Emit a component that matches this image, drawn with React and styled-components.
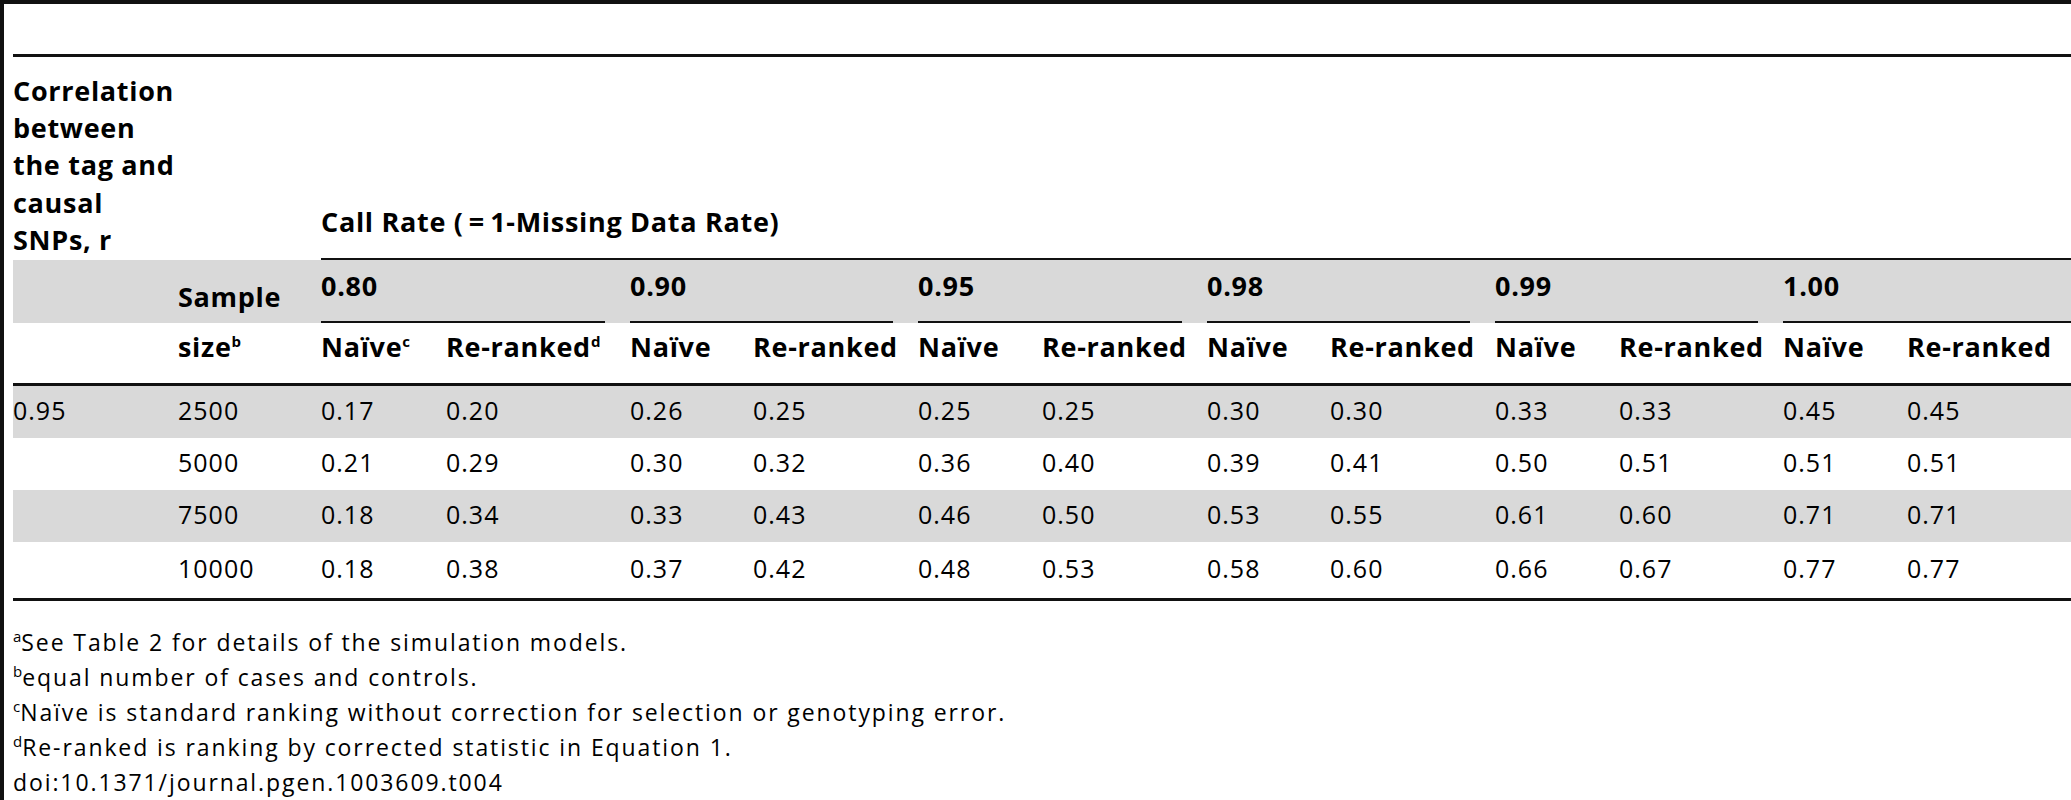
import styled, { createGlobalStyle } from 'styled-components';

const GlobalStyle = createGlobalStyle`
  html, body {
    margin: 0;
    padding: 0;
    background: #fff;
  }
  body {
    font-family: "Open Sans", "Liberation Sans", Arial, sans-serif;
    color: #000;
  }
`;

const Frame = styled.div`
  box-sizing: border-box;
  width: 2071px;
  height: 800px;
  overflow: hidden;
  border-top: 4px solid #111;
  border-left: 4px solid #111;
  padding: 50px 0 0 9px;
`;

const Table = styled.table`
  width: 2058px;
  table-layout: fixed;
  border-collapse: separate;
  border-spacing: 0;
  border-top: 3px solid #111;
  border-bottom: 3px solid #111;
`;

const Col = styled.col`
  width: ${(p) => p.$w}px;
`;

const Row = styled.tr`
  height: ${(p) => p.$h}px;
  background: ${(p) => (p.$shaded ? '#d9d9d9' : 'transparent')};
`;

const HeadCell = styled.th`
  padding: 0 24px 9px 0;
  text-align: left;
  vertical-align: bottom;
  font-weight: 700;
  font-size: 27px;
  line-height: 35px;
  letter-spacing: 0.7px;
  white-space: nowrap;
`;

const StubHead = styled(HeadCell)`
  padding-bottom: 2px;
  line-height: 37.2px;
`;

const SpanHead = styled(HeadCell)`
  padding: 0 0 19px;
  border-bottom: 2px solid #111;
`;

const SubHead = styled(HeadCell)`
  padding-bottom: 19px;
  border-bottom: 3px solid #111;
`;

const GroupCell = styled(HeadCell)`
  padding: 0;
`;

const GroupLabel = styled.div`
  margin-right: ${(p) => (p.$last ? 0 : 25)}px;
  padding-bottom: 18px;
  border-bottom: 2px solid #111;
`;

const Sup = styled.sup`
  font-size: 15px;
  line-height: 0;
  letter-spacing: 0;
  vertical-align: super;
`;

const Cell = styled.td`
  padding: 0 24px 4px 0;
  vertical-align: middle;
  font-size: 25px;
  line-height: 34px;
  letter-spacing: 1px;
  white-space: nowrap;
`;

const Notes = styled.div`
  margin-top: 24px;
  font-size: 23px;
  line-height: 35px;
  letter-spacing: 1.9px;
`;

const Note = styled.p`
  margin: 0;
  white-space: nowrap;
`;

const widths = [165, 143, 125, 184, 123, 165, 124, 165, 123, 165, 124, 164, 124, 164];
const callRates = ['0.80', '0.90', '0.95', '0.98', '0.99', '1.00'];
const rowHeights = [52, 52, 52, 56];

const rows = [
  ['0.95', '2500', '0.17', '0.20', '0.26', '0.25', '0.25', '0.25', '0.30', '0.30', '0.33', '0.33', '0.45', '0.45'],
  ['', '5000', '0.21', '0.29', '0.30', '0.32', '0.36', '0.40', '0.39', '0.41', '0.50', '0.51', '0.51', '0.51'],
  ['', '7500', '0.18', '0.34', '0.33', '0.43', '0.46', '0.50', '0.53', '0.55', '0.61', '0.60', '0.71', '0.71'],
  ['', '10000', '0.18', '0.38', '0.37', '0.42', '0.48', '0.53', '0.58', '0.60', '0.66', '0.67', '0.77', '0.77'],
];

const App = () => {
  return (
    <>
      <GlobalStyle />
      <Frame>
        <Table>
          <colgroup>
            {widths.map((w, i) => (
              <Col key={i} $w={w} />
            ))}
          </colgroup>
          <thead>
            <Row $h={203}>
              <StubHead>
                Correlation
                <br />
                between
                <br />
                the tag and
                <br />
                causal
                <br />
                SNPs, r
              </StubHead>
              <HeadCell />
              <SpanHead colSpan={12}>Call Rate (&#8201;=&#8201;1-Missing Data Rate)</SpanHead>
            </Row>
            <Row $h={63} $shaded>
              <HeadCell />
              <HeadCell>Sample</HeadCell>
              {callRates.map((rate, i) => (
                <GroupCell key={rate} colSpan={2}>
                  <GroupLabel $last={i === callRates.length - 1}>{rate}</GroupLabel>
                </GroupCell>
              ))}
            </Row>
            <Row $h={63}>
              <SubHead />
              <SubHead>
                size<Sup>b</Sup>
              </SubHead>
              {callRates.map((rate, i) => [
                <SubHead key={rate + 'n'}>
                  Naïve{i === 0 && <Sup>c</Sup>}
                </SubHead>,
                <SubHead key={rate + 'r'}>
                  Re-ranked{i === 0 && <Sup>d</Sup>}
                </SubHead>,
              ])}
            </Row>
          </thead>
          <tbody>
            {rows.map((row, r) => (
              <Row key={r} $h={rowHeights[r]} $shaded={r % 2 === 0}>
                {row.map((value, c) => (
                  <Cell key={c}>{value}</Cell>
                ))}
              </Row>
            ))}
          </tbody>
        </Table>
        <Notes>
          <Note>
            <Sup>a</Sup>See Table 2 for details of the simulation models.
          </Note>
          <Note>
            <Sup>b</Sup>equal number of cases and controls.
          </Note>
          <Note>
            <Sup>c</Sup>Naïve is standard ranking without correction for selection or genotyping error.
          </Note>
          <Note>
            <Sup>d</Sup>Re-ranked is ranking by corrected statistic in Equation 1.
          </Note>
          <Note>doi:10.1371/journal.pgen.1003609.t004</Note>
        </Notes>
      </Frame>
    </>
  );
};

export default App;
